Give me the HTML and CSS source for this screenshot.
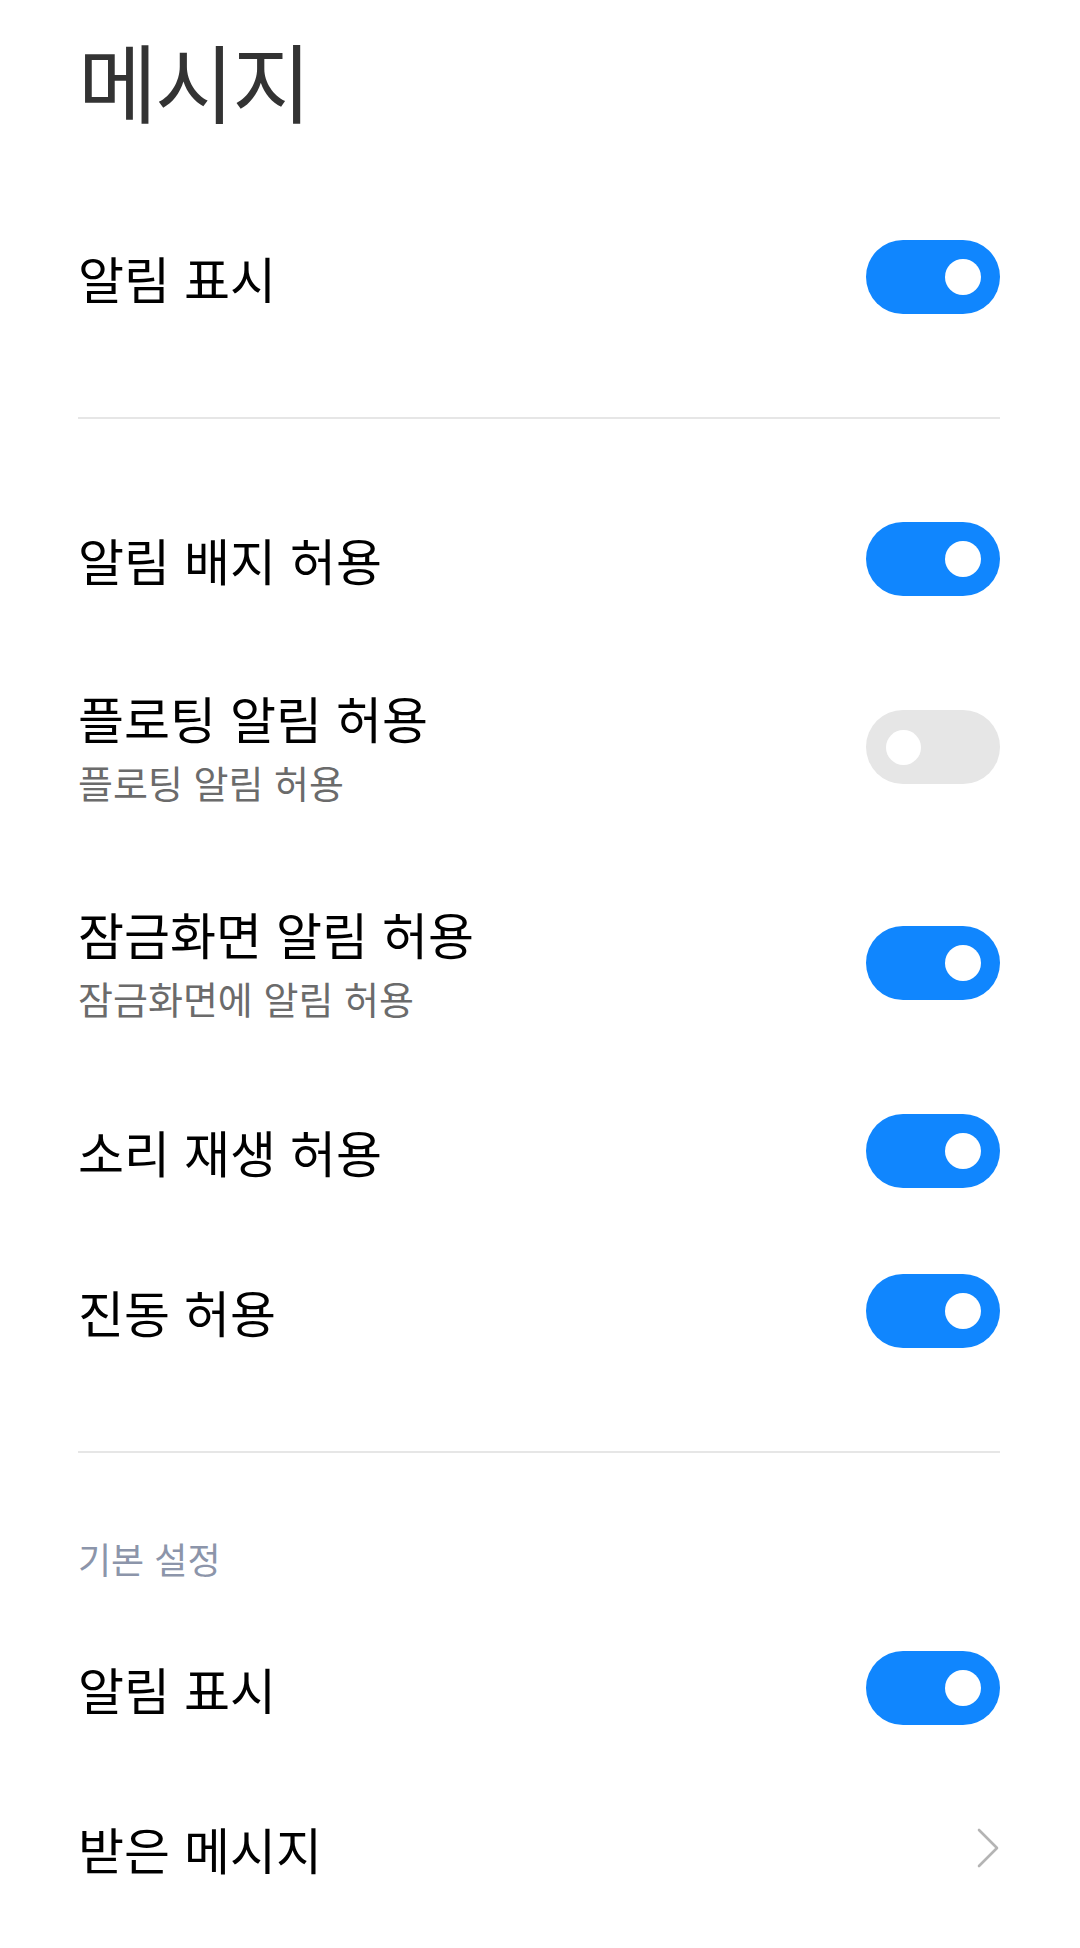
FILE: index.html
```html
<!DOCTYPE html>
<html lang="ko">
<head>
  <meta charset="UTF-8" />
  <meta name="viewport" content="width=device-width, initial-scale=1.0" />
  <title>메시지</title>
  <link rel="stylesheet" href="styles.css">
</head>
<body>
  <div class="page">
    <h1 class="title">메시지</h1>

    <div class="row">
      <span class="label">알림 표시</span>
      <span class="switch on"></span>
    </div>

    <hr class="divider" />

    <div class="row">
      <span class="label">알림 배지 허용</span>
      <span class="switch on"></span>
    </div>

    <div class="row tall">
      <div class="text">
        <div class="label">플로팅 알림 허용</div>
        <div class="hint">플로팅 알림 허용</div>
      </div>
      <span class="switch"></span>
    </div>

    <div class="row tall">
      <div class="text">
        <div class="label">잠금화면 알림 허용</div>
        <div class="hint">잠금화면에 알림 허용</div>
      </div>
      <span class="switch on"></span>
    </div>

    <div class="row">
      <span class="label">소리 재생 허용</span>
      <span class="switch on"></span>
    </div>

    <div class="row">
      <span class="label">진동 허용</span>
      <span class="switch on"></span>
    </div>

    <hr class="divider" />

    <div class="section">기본 설정</div>

    <div class="row">
      <span class="label">알림 표시</span>
      <span class="switch on"></span>
    </div>

    <div class="row">
      <span class="label">받은 메시지</span>
      <svg class="chevron" width="24" height="42" viewBox="0 0 24 42">
        <path d="M3 3 L21 21 L3 39" fill="none" stroke="#b4b4b4" stroke-width="2.6" stroke-linecap="round" stroke-linejoin="round" />
      </svg>
    </div>
  </div>
</body>
</html>
```

FILE: styles.css
```css
body {
  margin: 0;
  background: #fff;
  font-family: "Noto Sans CJK KR", "Noto Sans", sans-serif;
}
.page {
  padding: 30px 80px 0 78px;
}
.title {
  margin: 0 0 67px;
  font-size: 86px;
  line-height: 100px;
  font-weight: 400;
  letter-spacing: -2px;
  color: #333;
}
.row {
  height: 160px;
  display: flex;
  align-items: center;
  justify-content: space-between;
}
.row.tall {
  height: 216px;
}
.label {
  font-size: 50px;
  line-height: 56px;
  color: #000;
}
.hint {
  margin-top: 14px;
  font-size: 38px;
  line-height: 46px;
  color: #6b6b6b;
}
.switch {
  width: 134px;
  height: 74px;
  box-sizing: border-box;
  border-radius: 37px;
  background: #e6e6e6;
  display: flex;
  align-items: center;
  justify-content: flex-start;
  padding: 0 20px;
  flex-shrink: 0;
}
.switch::after {
  content: "";
  width: 35px;
  height: 35px;
  border-radius: 50%;
  background: #fff;
}
.switch.on {
  background: #1086fe;
  justify-content: flex-end;
  padding: 0 19px;
}
.switch.on::after {
  width: 36px;
  height: 36px;
}
.divider {
  margin: 60px 0;
  height: 2px;
  border: 0;
  background: #e6e6e6;
}
.section {
  padding: 21px 0 26px;
  font-size: 36px;
  line-height: 48px;
  color: #8c95aa;
}
.chevron {
  display: block;
  flex-shrink: 0;
}
```
